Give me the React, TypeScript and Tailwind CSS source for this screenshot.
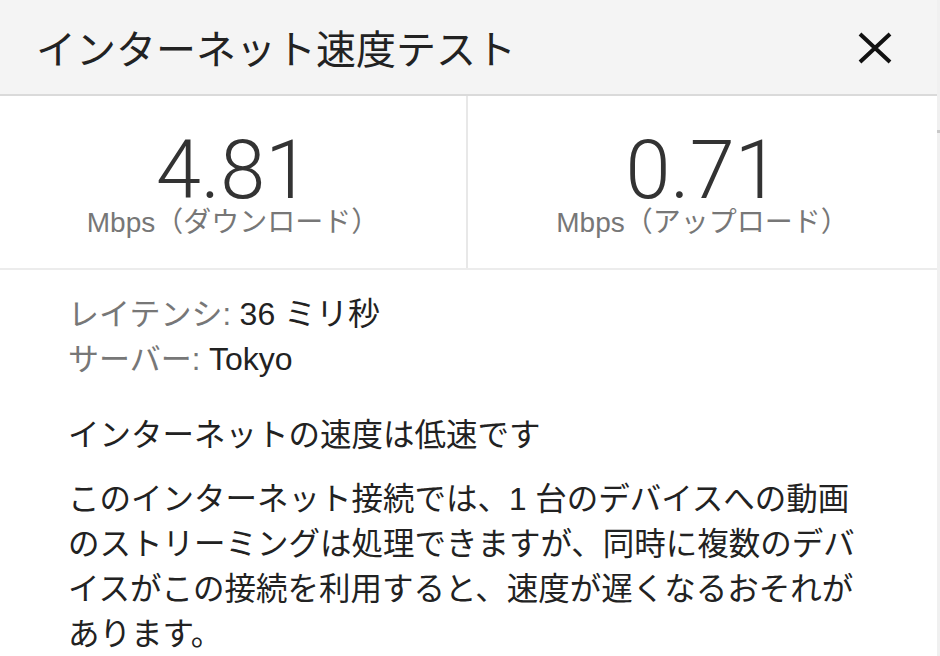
import React from "react";

const jp = { fontFamily: '"Liberation Sans", "Noto Sans CJK JP", sans-serif' };
const num = { fontFamily: 'Roboto, "Liberation Sans", sans-serif' };

function Stat({ value, label, border }: { value: string; label: string; border?: boolean }) {
  return (
    <div className={`flex flex-col items-center pt-[37px] ${border ? "border-r-2 border-[#e8e8e8]" : ""}`}>
      <div className="text-[81px] font-light leading-[76px] text-[#333333]" style={num}>
        {value}
      </div>
      <div className="text-[28px] leading-[28px] text-[#777777]">{label}</div>
    </div>
  );
}

export default function App() {
  return (
    <div className="flex h-[656px] w-[940px] overflow-hidden bg-white" style={jp}>
      <div className="flex min-w-0 flex-1 flex-col">
        <header className="flex h-[96px] shrink-0 items-center justify-between border-b-2 border-[#dadada] bg-[#f4f4f4] pl-[36px] pr-[44px]">
          <h1 className="mt-[5px] text-[40px] font-normal leading-none text-[#222222]">インターネット速度テスト</h1>
          <svg width="36" height="32" viewBox="0 0 36 32" className="mt-[2px]">
            <path d="M3 2 L33 30 M33 2 L3 30" stroke="#111" strokeWidth="4" fill="none" />
          </svg>
        </header>

        <section className="grid h-[174px] shrink-0 grid-cols-[468px_1fr] border-b-2 border-[#ececec]">
          <Stat value="4.81" label="Mbps（ダウンロード）" border />
          <Stat value="0.71" label="Mbps（アップロード）" />
        </section>

        <section className="pl-[68px] pr-[66px] pt-[22px]">
          <div className="text-[31px] leading-[44px]">
            <div>
              <span className="text-[#777777]">レイテンシ: </span>
              <span className="text-[32px] text-[#222222]">36 ミリ秒</span>
            </div>
            <div>
              <span className="text-[#777777]">サーバー: </span>
              <span className="text-[32px] text-[#222222]">Tokyo</span>
            </div>
          </div>
          <p className="mt-[31px] text-[31.5px] leading-[45px] text-[#222222]">インターネットの速度は低速です</p>
          <p className="mt-[19px] text-[31.5px] leading-[45px] text-[#222222]">
            このインターネット接続では、1 台のデバイスへの動画のストリーミングは処理できますが、同時に複数のデバイスがこの接続を利用すると、速度が遅くなるおそれがあります。
          </p>
        </section>
      </div>
      <div className="flex w-[3px] shrink-0 flex-col bg-[#f0f0f0]">
        <div className="mt-[130px] h-[3px] bg-[#c8c8c8]" />
      </div>
    </div>
  );
}
